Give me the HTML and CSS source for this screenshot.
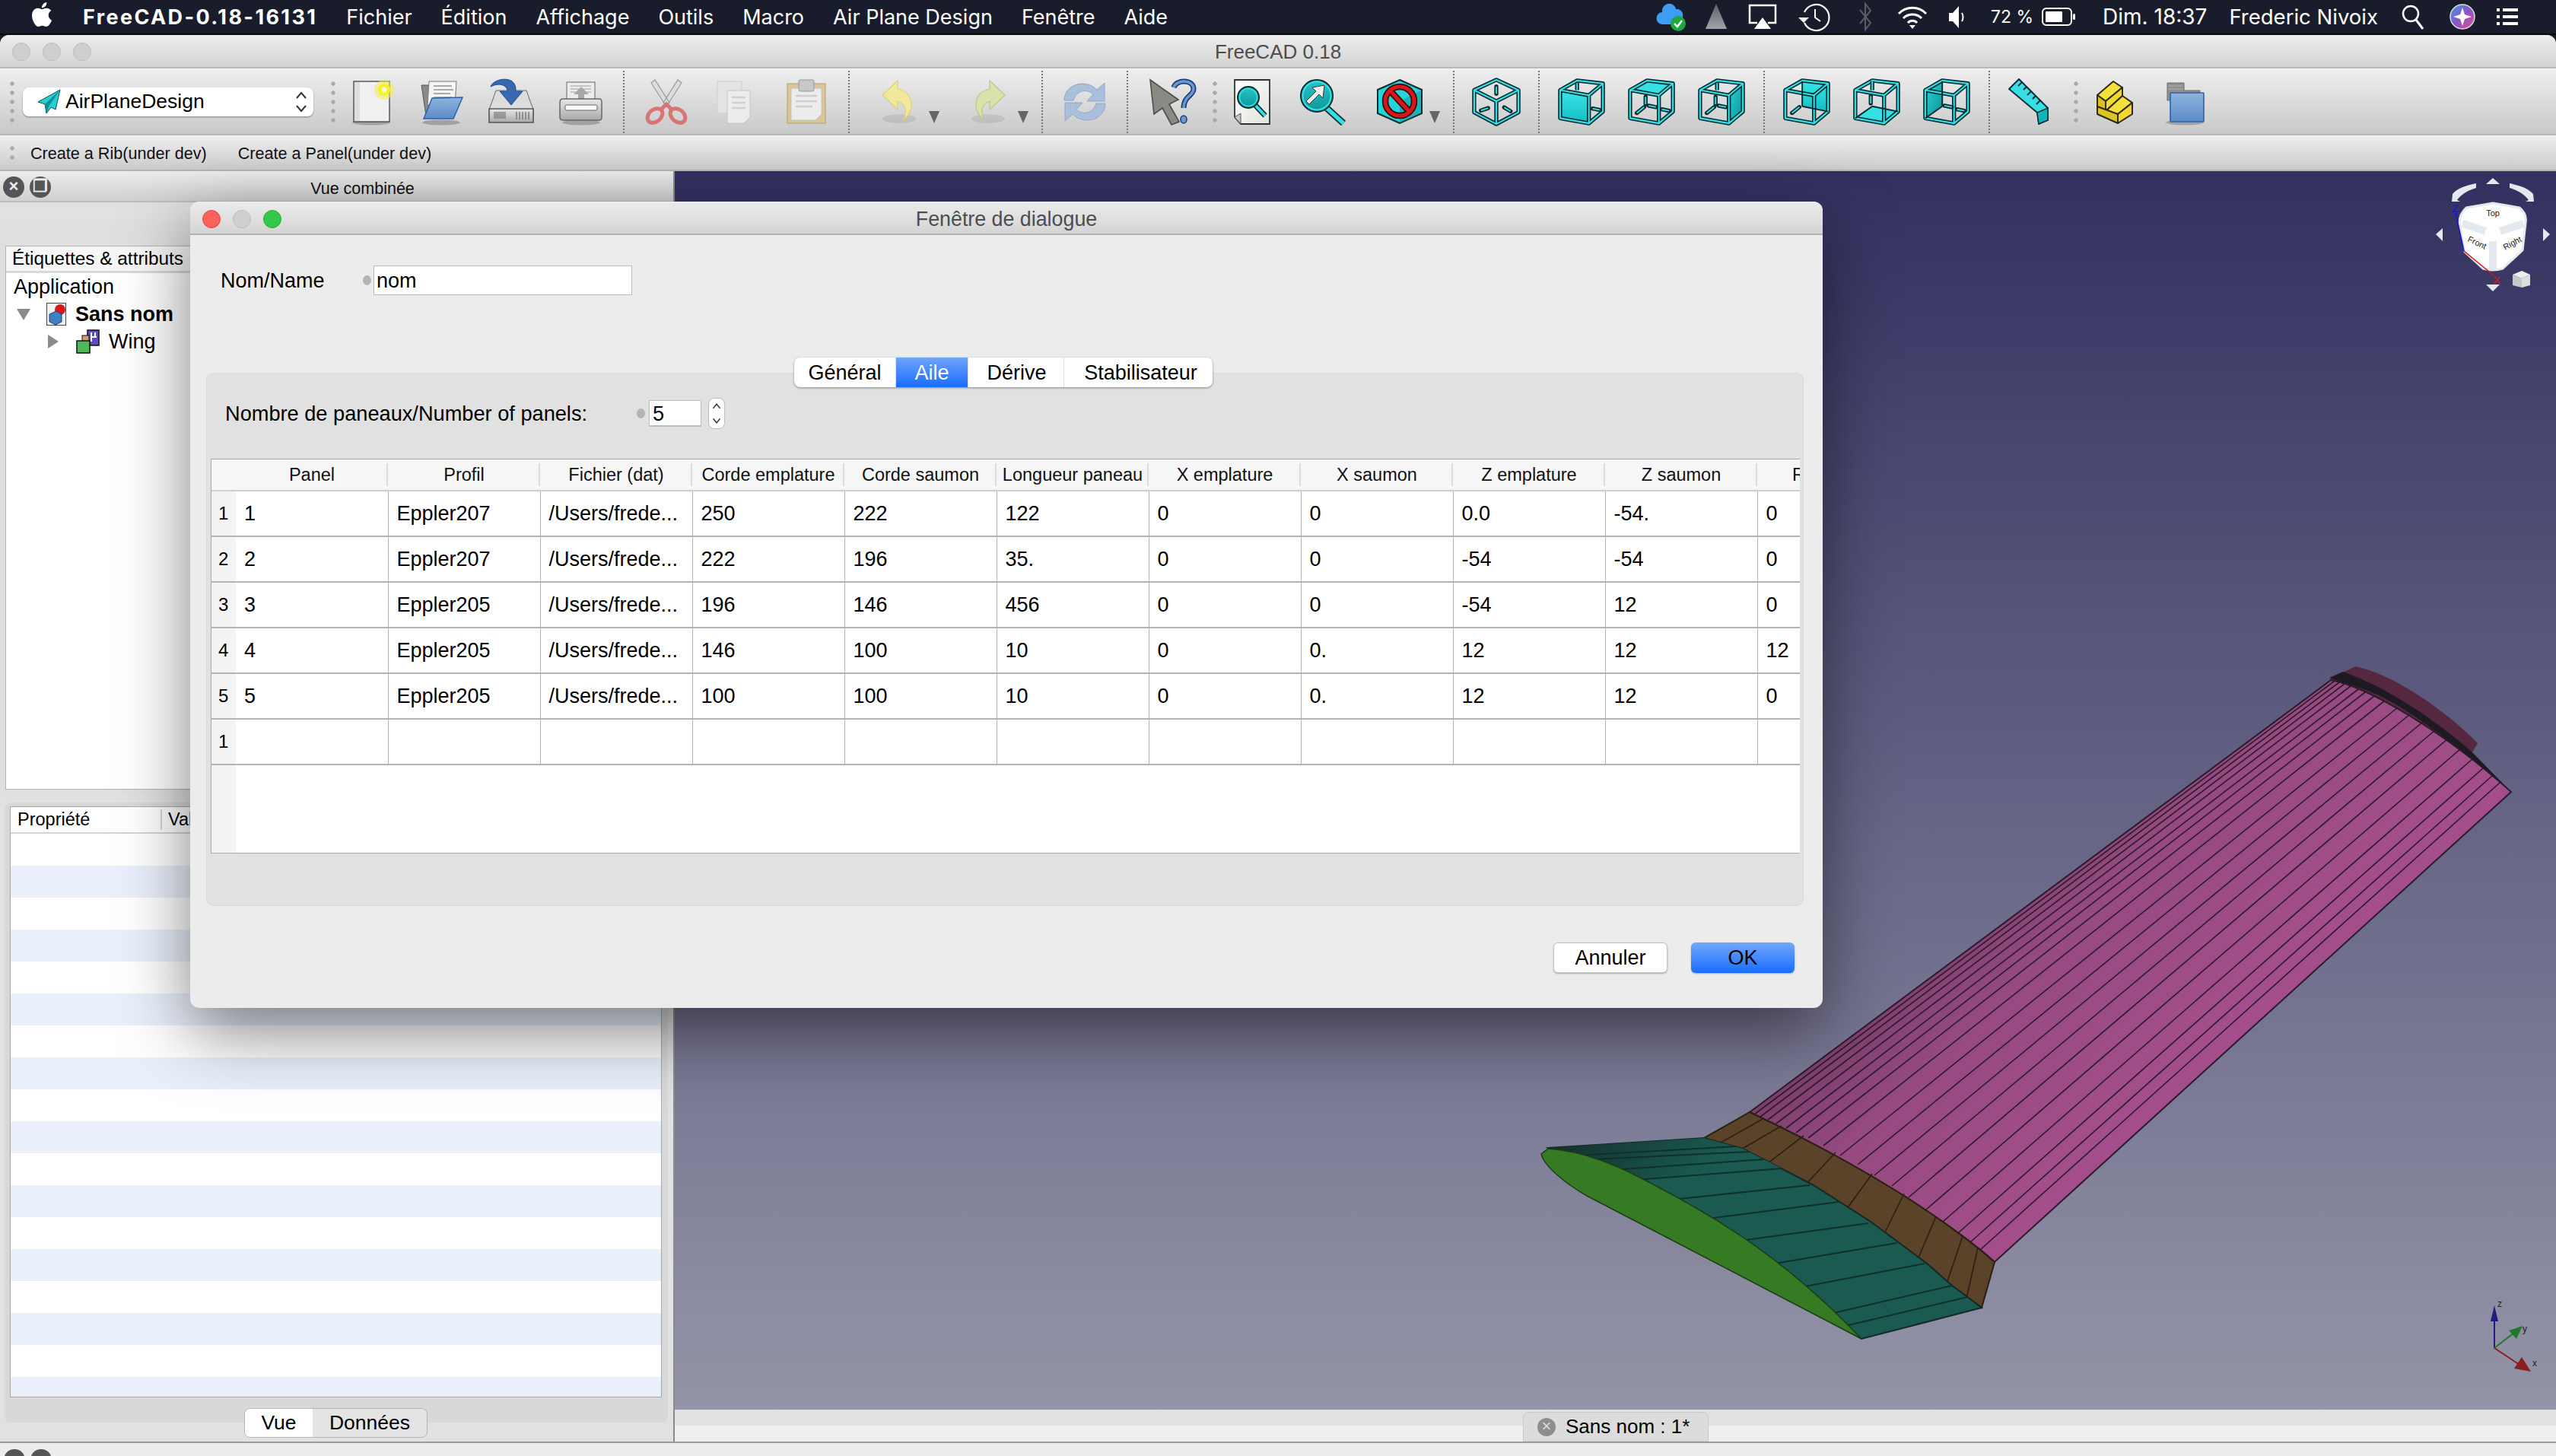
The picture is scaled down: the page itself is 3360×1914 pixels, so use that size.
FILE: index.html
```html
<!DOCTYPE html>
<html lang="fr">
<head>
    <meta charset="UTF-8">
    <title>FreeCAD 0.18</title>
    <link rel="stylesheet" href="styles.css">
</head>
<body>
    <svg class="defs" width="0" height="0">
        <defs>
            <linearGradient id="cyanFace" x1="0" y1="0" x2="0" y2="1"><stop offset="0" stop-color="#39e6e8"/><stop offset="1" stop-color="#14bcc2"/></linearGradient>
            <linearGradient id="darkFace" x1="0" y1="0" x2="1" y2="1"><stop offset="0" stop-color="#2bd4d8"/><stop offset="1" stop-color="#0b9296"/></linearGradient>
            <linearGradient id="glass" x1="0" y1="0" x2="0" y2="1"><stop offset="0" stop-color="#27c6ca"/><stop offset="1" stop-color="#0e9599"/></linearGradient>
            <linearGradient id="paper" x1="0" y1="0" x2="1" y2="1"><stop offset="0" stop-color="#ffffff"/><stop offset="1" stop-color="#dfe4da"/></linearGradient>
            <linearGradient id="folderBlue" x1="0" y1="0" x2="0" y2="1"><stop offset="0" stop-color="#8fb4dc"/><stop offset="1" stop-color="#5a8cc8"/></linearGradient>
            <linearGradient id="driveBody" x1="0" y1="0" x2="0" y2="1"><stop offset="0" stop-color="#e8e8e8"/><stop offset="1" stop-color="#a8a8a8"/></linearGradient>
            <linearGradient id="wingPink" gradientUnits="userSpaceOnUse" x1="2300" y1="1300" x2="2640" y2="1640"><stop offset="0" stop-color="#55304f"/><stop offset=".22" stop-color="#7a3e6c"/><stop offset=".5" stop-color="#954a80"/><stop offset="1" stop-color="#a34e8a"/></linearGradient>
            <linearGradient id="wingTeal" gradientUnits="userSpaceOnUse" x1="2060" y1="1480" x2="2180" y2="1600"><stop offset="0" stop-color="#14302c"/><stop offset="1" stop-color="#1a5a50"/></linearGradient>
            <linearGradient id="siri" x1="0" y1="0" x2="1" y2="1"><stop offset="0" stop-color="#3aa0e8"/><stop offset=".5" stop-color="#8a55c8"/><stop offset="1" stop-color="#e0508a"/></linearGradient>
            <linearGradient id="deltaGrey" x1="0" y1="0" x2="0" y2="1"><stop offset="0" stop-color="#5d6068"/><stop offset="1" stop-color="#a2a4a8"/></linearGradient>

            <g id="slot-v"><path d="M0 -5V5" stroke="#052b30" stroke-width="5.5" stroke-linecap="round"/><path d="M0 -5V5" stroke="#35dfe3" stroke-width="2"/></g>
            <g id="slot-h"><path d="M-5 -1L5 1" stroke="#052b30" stroke-width="5.5" stroke-linecap="round"/><path d="M-5 -1L5 1" stroke="#35dfe3" stroke-width="2"/></g>
            <g id="slot-d"><path d="M-5 4L5 -4" stroke="#052b30" stroke-width="5.5" stroke-linecap="round"/><path d="M-5 4L5 -4" stroke="#35dfe3" stroke-width="2"/></g>
            <g id="cube-frame" fill="none" stroke-linejoin="round">
                <path d="M24 1L59 5V43L40 59L1 52V14ZM1 14L40 21L59 5M40 21V59" stroke="#052b30" stroke-width="5.5"/>
                <path d="M24 1L59 5V43L40 59L1 52V14ZM1 14L40 21L59 5M40 21V59" stroke="#35dfe3" stroke-width="2.2"/>
            </g>
            <g id="cube-back" fill="none"><path d="M24 2V14" stroke="#052b30" stroke-width="5.5"/><path d="M24 2V14" stroke="#35dfe3" stroke-width="2"/></g>
            <g id="tool-shadow"><ellipse cx="32" cy="59" rx="25" ry="3.5" fill="#000" opacity=".22"/></g>
        </defs>
    </svg>

    <header class="menubar">
        <svg class="apple" viewBox="0 0 24 24"><path fill="#fff" d="M12.152 6.896c-.948 0-2.415-1.078-3.96-1.04-2.04.027-3.91 1.183-4.961 3.014-2.117 3.675-.546 9.103 1.519 12.09 1.013 1.454 2.208 3.09 3.792 3.039 1.52-.065 2.09-.987 3.935-.987 1.831 0 2.35.987 3.96.948 1.637-.026 2.676-1.48 3.676-2.948 1.156-1.688 1.636-3.325 1.662-3.415-.039-.013-3.182-1.221-3.22-4.857-.026-3.04 2.48-4.494 2.597-4.559-1.429-2.09-3.623-2.324-4.39-2.376-2-.156-3.675 1.09-4.61 1.09zM15.53 3.83c.843-1.012 1.4-2.427 1.245-3.83-1.207.052-2.662.805-3.532 1.818-.78.896-1.454 2.338-1.273 3.714 1.338.104 2.715-.688 3.559-1.701"/></svg>
        <nav class="menu">
            <span class="app-name">FreeCAD-0.18-16131</span>
            <span>Fichier</span>
            <span>Édition</span>
            <span>Affichage</span>
            <span>Outils</span>
            <span>Macro</span>
            <span>Air Plane Design</span>
            <span>Fenêtre</span>
            <span>Aide</span>
        </nav>
        <div class="status">
            <svg class="st st-cloud" viewBox="0 0 56 40"><path fill="#3d9df5" d="M14 30a8 8 0 0 1-1-16 10 10 0 0 1 5-10c5-3 12 0 13 6a8 8 0 0 1 9 10v4a6 6 0 0 1-6 6z"/><circle cx="34" cy="29" r="10" fill="#1ca83a"/><path d="M29 29l4 4 6-8" fill="none" stroke="#fff" stroke-width="2.5"/></svg>
            <svg class="st st-delta" viewBox="0 0 56 40"><path fill="url(#deltaGrey)" d="M28 3L42 36H14z"/></svg>
            <svg class="st st-air" viewBox="0 0 65 40"><path fill="none" stroke="#fff" stroke-width="2.5" d="M26 28H16V5H50V28H40"/><path fill="#fff" d="M33 21L44 36H22z"/></svg>
            <svg class="st st-time" viewBox="0 0 70 40"><path fill="none" stroke="#fff" stroke-width="2.2" d="M23 14A17 17 0 1 1 23 28"/><path fill="#fff" d="M15 21h14l-7 7z"/><path fill="none" stroke="#fff" stroke-width="2" d="M37 10V21L44 26"/></svg>
            <svg class="st st-bt" viewBox="0 0 66 40"><path fill="none" stroke="#5a5d66" stroke-width="2" d="M26 11L40 28L33 37V3L40 12L26 29"/></svg>
            <svg class="st st-wifi" viewBox="0 0 57 40"><path fill="none" stroke="#fff" stroke-width="3" d="M11 16a25 25 0 0 1 36 0M17 22a17 17 0 0 1 24 0M23 28a8 8 0 0 1 12 0"/><path fill="#fff" d="M29 36l-4-5h8z"/></svg>
            <svg class="st st-vol" viewBox="0 0 55 40"><path fill="#fff" d="M20 15h5l8-9v29l-8-9h-5z"/><path fill="none" stroke="#fff" stroke-width="2" d="M37 15c2 3 2 8 0 11"/></svg>
            <span class="st-pct">72 %</span>
            <svg class="st-bat" viewBox="0 0 44 24"><rect x="1" y="1" width="38" height="22" rx="5" fill="none" stroke="#fff" stroke-width="2"/><rect x="5" y="5" width="22" height="14" rx="1" fill="#fff"/><rect x="41" y="8" width="3" height="8" rx="1.5" fill="#fff"/></svg>
            <span class="st-clock">Dim. 18:37</span>
            <span class="st-user">Frederic Nivoix</span>
            <svg class="st st-search" viewBox="0 0 40 40"><circle cx="17" cy="16" r="10" fill="none" stroke="#fff" stroke-width="2.5"/><path d="M24 24L33 36" stroke="#fff" stroke-width="3"/></svg>
            <svg class="st st-siri" viewBox="0 0 40 40"><circle cx="20" cy="20" r="16" fill="url(#siri)" stroke="#ddd" stroke-width="1.5"/><path fill="#fff" d="M20 8l3 9 9 3-9 3-3 9-3-9-9-3 9-3z"/></svg>
            <svg class="st st-list" viewBox="0 0 36 40"><path fill="#fff" d="M4 9h4v4H4zM12 9h20v4H12zM4 18h4v4H4zM12 18h20v4H12zM4 27h4v4H4zM12 27h20v4H12z"/></svg>
        </div>
    </header>

    <div class="window">
        <div class="titlebar">
            <div class="lights">
                <i class="light"></i><i class="light"></i><i class="light"></i>
            </div>
            <span class="window-title">FreeCAD 0.18</span>
        </div>

        <div class="toolbar">
            <i class="handle"></i>
            <div class="combo">
                <svg class="combo-icon" viewBox="0 0 32 34"><path fill="#27cfd3" stroke="#0b5055" stroke-width="1" d="M30 1L1 17l9 3 2 12 6-8 6 3z"/><path fill="#0e8f93" d="M30 1L10 20l2 12 3-9z"/></svg>
                <span class="combo-label">AirPlaneDesign</span>
                <svg class="combo-arrows" viewBox="0 0 16 30"><path fill="none" stroke="#333" stroke-width="2" d="M2 10L8 3l6 7M2 20l6 7 6-7"/></svg>
            </div>
            <i class="handle handle-gap"></i>

            <button class="tb"><svg viewBox="0 0 64 64">
                <use href="#tool-shadow"/>
                <rect x="9" y="5" width="47" height="53" fill="#f0f0f0" stroke="#333" stroke-width="1.2"/>
                <rect x="10" y="6" width="7" height="51" fill="#dedede"/>
                <circle cx="49" cy="16" r="13" fill="#f3ec4a" opacity=".55"/><circle cx="49" cy="16" r="8" fill="#f6f02e"/><circle cx="49" cy="16" r="3.5" fill="#fffbc0"/>
            </svg></button>
            <button class="tb"><svg viewBox="0 0 64 64">
                <use href="#tool-shadow"/>
                <path fill="#8a8a8a" stroke="#555" d="M6 10H20V50H12z"/>
                <path fill="#f4f4f4" stroke="#777" d="M16 5L52 5 L50 36H14z"/>
                <path stroke="#aaa" stroke-width="2" d="M22 11H46M22 16H48M22 21H44M22 26H46"/>
                <path fill="url(#folderBlue)" stroke="#2f62a4" stroke-width="1.5" d="M20 27L60 26 48 54H9z"/>
            </svg></button>
            <button class="tb"><svg viewBox="0 0 64 64">
                <path fill="#dcdcdc" stroke="#666" d="M12 17H52L61 42V57H3V42z"/>
                <path fill="url(#driveBody)" stroke="#555" stroke-width="1.5" d="M3 41H61V59H3z"/>
                <rect x="9" y="45" width="16" height="9" fill="#777" opacity=".6"/>
                <path stroke="#777" stroke-width="1.4" d="M39 45V55M43 45V55M47 45V55M51 45V55M55 45V55"/>
                <path fill="#3869ae" stroke="#1e4a8c" d="M5 12C8 2 30 -2 36 8C38 12 38 14 38 18H47L32 36L17 18H27C27 10 16 6 5 12z"/>
            </svg></button>
            <button class="tb"><svg viewBox="0 0 64 64">
                <use href="#tool-shadow"/>
                <rect x="13" y="6" width="37" height="28" fill="#ececec" stroke="#666"/>
                <path stroke="#c4c4c4" stroke-width="2" d="M18 11H45M18 15H45M18 19H28M36 19H45"/>
                <path fill="#a8a8a8" d="M32 12L42 22H36V32H28V22H22z"/>
                <path fill="url(#driveBody)" stroke="#666" stroke-width="1.5" d="M8 28H56Q59 28 59 33V52Q59 56 56 56H8Q4 56 4 52V33Q4 28 8 28z"/>
                <rect x="11" y="36" width="42" height="7" rx="2" fill="#fafafa" stroke="#666"/>
            </svg></button>
            <i class="tb-sep"></i>
            <button class="tb"><svg viewBox="0 0 64 64">
                <path fill="#dcdcdc" stroke="#999" stroke-width="1.2" d="M12 7L17 3 36 33 32 38zM52 7L47 3 28 33 32 38z"/>
                <g fill="none" stroke="#d87474" stroke-width="5"><ellipse cx="17" cy="50" rx="11" ry="8" transform="rotate(-40 17 50)"/><ellipse cx="47" cy="50" rx="11" ry="8" transform="rotate(40 47 50)"/><path d="M25 42L32 35 39 42"/></g>
            </svg></button>
            <button class="tb"><svg viewBox="0 0 64 64">
                <rect x="7" y="5" width="32" height="42" fill="#e3e3e3" stroke="#cfcfcf"/>
                <path fill="#ececec" stroke="#c4c4c4" d="M20 17H50V52L42 60H20z"/>
                <path stroke="#d0d0d0" stroke-width="2.5" d="M26 26H44M26 33H44M26 40H44"/>
            </svg></button>
            <button class="tb"><svg viewBox="0 0 64 64">
                <rect x="7" y="8" width="50" height="52" fill="#d9c69a" stroke="#b89e68"/>
                <path fill="#ececec" stroke="#c4c4c4" d="M12 14H52V48L44 56H12z"/>
                <rect x="22" y="3" width="20" height="15" rx="2" fill="#c8c8c8" stroke="#999"/>
                <path stroke="#cfcfcf" stroke-width="2.5" d="M18 24H46M18 31H46M18 38H40"/>
            </svg></button>
            <i class="tb-sep"></i>
            <button class="tb tb-drop"><svg viewBox="0 0 64 64">
                <ellipse cx="32" cy="54" rx="22" ry="6" fill="#000" opacity=".08"/>
                <path fill="#f2e89c" stroke="#dccf7c" stroke-width="1.2" d="M10 23L30 4V15C48 18 56 38 38 56 42 44 42 36 30 31V42z"/>
            </svg><i class="drop-arrow"></i></button>
            <button class="tb tb-drop"><svg viewBox="0 0 64 64">
                <ellipse cx="32" cy="54" rx="22" ry="6" fill="#000" opacity=".08"/>
                <path fill="#d9e2aa" stroke="#bcc88a" stroke-width="1.2" d="M54 23L34 4V15C16 18 8 38 26 56 22 44 22 36 34 31V42z"/>
            </svg><i class="drop-arrow"></i></button>
            <i class="tb-sep"></i>
            <button class="tb"><svg viewBox="0 0 64 64">
                <g fill="#a9bfdb" stroke="#8ea8c8">
                    <path d="M5 30C5 8 34 1 48 16L58 7V31H35L43 22C34 14 21 17 17 30z"/>
                    <path d="M59 34C59 56 30 63 16 48L6 57V33H29L21 42C30 50 43 47 47 34z"/>
                </g>
            </svg></button>
            <i class="tb-sep"></i>
            <button class="tb"><svg viewBox="0 0 64 64">
                <path fill="#8a8a84" stroke="#4e4e4a" stroke-width="1.6" d="M6 3L43 29 31 35 44 58 34 62 22 40 11 48z"/>
                <path fill="none" stroke="#1e3f78" stroke-width="7" d="M37 13C40 2 63 2 63 15C63 24 50 24 50 40"/>
                <path fill="none" stroke="#6d97cf" stroke-width="3.5" d="M37 13C40 2 63 2 63 15C63 24 50 24 50 40"/>
                <ellipse cx="50" cy="55" rx="4" ry="5" fill="#6d97cf" stroke="#1e3f78" stroke-width="1.6"/>
            </svg></button>
            <i class="handle handle-mid"></i>
            <button class="tb"><svg viewBox="0 0 64 64">
                <path fill="url(#paper)" stroke="#2c3336" stroke-width="1.8" d="M9 3H55V61H17L9 52z"/>
                <path fill="#c4c8c0" stroke="#555" d="M9 52L17 47V61z"/>
                <path d="M34 34L49 50" stroke="#052b30" stroke-width="7"/><path d="M34 34L49 50" stroke="#35dfe3" stroke-width="4"/>
                <circle cx="27" cy="26" r="14" fill="url(#glass)" stroke="#052b30" stroke-width="2"/>
                <circle cx="27" cy="26" r="11.5" fill="none" stroke="#35dfe3" stroke-width="1.5"/>
            </svg></button>
            <button class="tb"><svg viewBox="0 0 64 64">
                <path d="M38 40L60 60" stroke="#052b30" stroke-width="9"/><path d="M38 40L60 60" stroke="#35dfe3" stroke-width="5.5"/>
                <circle cx="25" cy="24" r="21" fill="url(#glass)" stroke="#052b30" stroke-width="2"/>
                <circle cx="25" cy="24" r="18.5" fill="none" stroke="#35dfe3" stroke-width="2"/>
                <path fill="#f0f0e8" stroke="#333" d="M35 10L33 27 28 22 15 35 11 31 24 18 19 13z"/>
            </svg></button>
            <button class="tb tb-drop"><svg viewBox="0 0 64 64">
                <path fill="#25d4d8" stroke="#052b30" stroke-width="2" d="M32 3L61 16V47L32 60 3 47V16z"/>
                <path fill="#16b4b8" d="M32 31L60 17V46L32 59z"/>
                <circle cx="32" cy="31" r="19" fill="none" stroke="#3a0808" stroke-width="8.5"/>
                <path d="M20 18L44 44" stroke="#3a0808" stroke-width="8.5"/>
                <circle cx="32" cy="31" r="19" fill="none" stroke="#d81818" stroke-width="5"/>
                <path d="M20 18L44 44" stroke="#d81818" stroke-width="5"/>
            </svg><i class="drop-arrow"></i></button>
            <i class="tb-sep"></i>
            <button class="tb"><svg viewBox="-1 -1 66 66" fill="none">
                <path d="M32 2L62 16V46L32 62 2 46V16ZM2 16L32 31 62 16M32 31V62" stroke="#052b30" stroke-width="5.5" stroke-linejoin="round"/>
                <path d="M32 2L62 16V46L32 62 2 46V16ZM2 16L32 31 62 16M32 31V62" stroke="#35dfe3" stroke-width="2.2"/>
                <use href="#slot-v" x="32" y="16"/><use href="#slot-h" x="16" y="42" transform="rotate(-30 16 42)"/><use href="#slot-h" x="47" y="42" transform="rotate(20 47 42)"/>
            </svg></button>
            <i class="tb-sep"></i>
            <button class="tb"><svg viewBox="-3 -3 66 66">
                <path fill="url(#cyanFace)" d="M1 14L40 21V59L1 52z"/>
                <use href="#cube-back"/><use href="#cube-frame"/><use href="#slot-h" x="50" y="40"/>
            </svg></button>
            <button class="tb"><svg viewBox="-3 -3 66 66">
                <path fill="#33e0e4" d="M24 1L59 5 40 21 1 14z"/>
                <use href="#cube-frame"/><use href="#slot-v" x="22" y="28"/><use href="#slot-d" x="15" y="41"/><use href="#slot-h" x="31" y="36"/><use href="#slot-h" x="49" y="41"/>
            </svg></button>
            <button class="tb"><svg viewBox="-3 -3 66 66">
                <path fill="url(#darkFace)" d="M40 21L59 5V43L40 59z"/>
                <use href="#cube-back"/><use href="#cube-frame"/><use href="#slot-v" x="22" y="28"/><use href="#slot-d" x="15" y="41"/><use href="#slot-h" x="31" y="36"/>
            </svg></button>
            <i class="tb-sep"></i>
            <button class="tb"><svg viewBox="-3 -3 66 66">
                <path fill="url(#cyanFace)" d="M24 1L59 5V43L24 36z"/>
                <use href="#cube-frame"/><path d="M24 2V36" stroke="#052b30" stroke-width="2"/><path d="M24 36L59 43" stroke="#052b30" stroke-width="2"/><use href="#slot-d" x="15" y="41"/>
            </svg></button>
            <button class="tb"><svg viewBox="-3 -3 66 66">
                <path fill="#33e0e4" d="M1 52L24 36 59 43 40 59z"/>
                <use href="#cube-frame"/><use href="#cube-back"/><path d="M24 36L59 43M24 36L1 52" stroke="#052b30" stroke-width="2"/><use href="#slot-v" x="22" y="27"/>
            </svg></button>
            <button class="tb"><svg viewBox="-3 -3 66 66">
                <path fill="url(#darkFace)" d="M24 1L1 14V52L24 36z"/>
                <use href="#cube-frame"/><path d="M24 2V36M24 36L1 52" stroke="#052b30" stroke-width="2"/><use href="#slot-h" x="32" y="36"/><use href="#slot-h" x="49" y="41"/>
            </svg></button>
            <i class="tb-sep tb-sep-tight"></i>
            <button class="tb"><svg viewBox="0 0 64 64">
                <path fill="#35dfe3" stroke="#052b30" stroke-width="1.8" stroke-linejoin="round" d="M19 2L57 40V56L45 61L43 46L6 15z"/>
                <path fill="#12b4b8" stroke="#052b30" stroke-width="1.4" d="M43 46L57 40V56L45 61z"/>
                <path stroke="#052b30" stroke-width="1.8" d="M23 6l-5 5M29 12l-4 4M35 18l-5 5M41 24l-4 4M47 30l-5 5"/>
            </svg></button>
            <i class="handle handle-last"></i>
            <button class="tb"><svg viewBox="0 0 64 64">
                <g stroke="#2e2a10" stroke-width="2" stroke-linejoin="round">
                    <path fill="#f4e03c" d="M30 5L42 13 20 31 9 23z"/>
                    <path fill="#d9bf20" d="M9 23L20 31V46L9 38z"/>
                    <path fill="#f0d830" d="M20 31L42 13V24L20 44z"/>
                    <path fill="#f4e03c" d="M20 44L42 24 55 33 36 48z"/>
                    <path fill="#dcc424" d="M9 38L36 48V60L9 48z"/>
                    <path fill="#f0d830" d="M36 48L55 33V48L36 60z"/>
                </g>
            </svg></button>
            <button class="tb"><svg viewBox="0 0 64 64">
                <use href="#tool-shadow"/>
                <path fill="#8f8f8f" stroke="#6c6c6c" d="M9 7H31V17H52V30H9z"/>
                <path stroke="#a8a8a8" stroke-width="1.5" d="M10 11H30M10 15H30"/>
                <rect x="13" y="20" width="44" height="38" rx="1" fill="url(#folderBlue)" stroke="#2f62a4" stroke-width="1.6"/>
            </svg></button>
        </div>

        <div class="toolbar-small">
            <i class="handle handle-short"></i>
            <span class="cmd">Create a Rib(under dev)</span>
            <span class="cmd">Create a Panel(under dev)</span>
        </div>

        <div class="workspace">
            <aside class="dock">
                <div class="dock-title">
                    <i class="dock-btn">×</i>
                    <i class="dock-btn">❐</i>
                    <span class="dock-name">Vue combinée</span>
                </div>
                <div class="dock-pane">
                    <div class="tree">
                        <div class="tree-head">Étiquettes &amp; attributs</div>
                        <div class="tree-row">Application</div>
                        <div class="tree-row tree-doc">
                            <i class="arrow-down"></i>
                            <svg class="tree-icon" viewBox="0 0 26 30"><rect x=".5" y=".5" width="25" height="29" fill="#f2f2f2" stroke="#444"/><circle cx="18" cy="9" r="7" fill="#d81818"/><path fill="#3f7fc4" stroke="#1e3f78" d="M4 15L13 11 20 15V25L12 29 4 25z"/></svg>
                            <b>Sans nom</b>
                        </div>
                        <div class="tree-row tree-wing">
                            <i class="arrow-right"></i>
                            <svg class="tree-icon-wide" viewBox="0 0 32 32"><rect x="16" y="1" width="15" height="20" fill="#5a4ec4" stroke="#111" stroke-width="1.5"/><path d="M21 4V16M26 4V9M21 10H28" stroke="#fff" stroke-width="2"/><rect x="9" y="8" width="9" height="10" fill="#caa070" stroke="#111"/><rect x="2" y="15" width="17" height="16" fill="#4eb85a" stroke="#111" stroke-width="1.5"/></svg>
                            <span>Wing</span>
                        </div>
                    </div>
                </div>
                <div class="props">
                    <div class="props-table">
                        <div class="props-head"><span class="props-col">Propriété</span><span class="props-col2">Valeur</span></div>
                        <div class="props-rows"></div>
                    </div>
                    <div class="props-tabs">
                        <span class="props-tab props-tab-on">Vue</span>
                        <span class="props-tab">Données</span>
                    </div>
                </div>
            </aside>

            <section class="view">
                <div class="canvas">
                    <svg class="scene" viewBox="887 226 2473 1628">
                        <!-- wing -->
                        <path fill="#552840" d="M3062 894L3096 877C3140 885 3210 930 3257 978L3250 990L3190 960z"/>
                        <path fill="#1e1a22" d="M3062 892L3080 884C3140 905 3205 950 3250 990L3301 1042C3240 990 3160 925 3110 908z"/>
                        <path fill="url(#wingPink)" stroke="#2a1a2a" stroke-width="2" d="M2300 1463L3064 895C3110 903 3210 960 3301 1042L2622 1660C2590 1630 2480 1550 2300 1463z"/>
                        <g stroke="#2c1a2c" stroke-width="1.6">
                            <path d="M2306 1466L3069 896M2314 1469L3075 898M2324 1473L3082 900M2335 1478L3090 903M2348 1484L3100 907M2361 1490L3109 911M2377 1497L3121 916M2397 1507L3135 922M2419 1520L3152 931M2442 1532L3168 940M2464 1546L3185 950M2487 1560L3201 961M2509 1575L3218 972M2532 1591L3235 985M2554 1607L3251 998M2574 1622L3265 1010M2590 1634L3277 1020M2603 1644L3287 1029"/>
                        </g>
                        <path fill="#5a4328" stroke="#2a2014" stroke-width="2" d="M2300 1463C2400 1510 2530 1580 2622 1660L2605 1720L2566 1691L2533 1662L2459 1607L2384 1559L2291 1511L2240 1497z"/>
                        <g stroke="#2a2014" stroke-width="1.6">
                            <path d="M2319 1471L2262 1503M2342 1481L2287 1513M2371 1494L2320 1533M2413 1516L2368 1564M2461 1544L2422 1598M2503 1570L2470 1637M2545 1600L2517 1666M2580 1626L2558 1691M2600 1641L2585 1708"/>
                        </g>
                        <path fill="#1a5a50" stroke="#142a26" stroke-width="2" d="M2035 1510L2240 1497L2291 1511L2384 1559L2459 1607L2533 1662L2566 1691L2605 1720L2447 1761L2226 1620z"/>
                        <path fill="url(#wingTeal)" d="M2035 1510L2240 1497L2291 1511L2342 1537L2151 1552L2100 1550z"/>
                        <g stroke="#10302a" stroke-width="2">
                            <path d="M2198 1578L2379 1559M2237 1604L2417 1581M2280 1633L2456 1609M2321 1664L2493 1635M2363 1694L2530 1662M2406 1728L2566 1691M2426 1744L2586 1706M2151 1552L2342 1537M2119 1539L2319 1525M2096 1525L2300 1515M2072 1520L2282 1508"/>
                        </g>
                        <path fill="#367a24" stroke="#1d3d14" stroke-width="1.5" d="M2035 1511C2100 1515 2160 1550 2226 1587S2370 1680 2447 1761L2086 1573C2060 1558 2030 1535 2026 1518z"/>

                        <!-- nav cube -->
                        <g fill="#e4e9f0">
                            <path d="M3277 235L3286 243H3268z"/>
                            <path d="M3202 309L3211 301V318z"/>
                            <path d="M3352 309L3343 301V318z"/>
                            <path d="M3277 384L3268 375H3286z"/>
                            <path d="M3255 242V248C3242 252 3234 258 3230 264L3234 266H3223L3224 256C3230 249 3240 245 3255 242z"/>
                            <path d="M3299 242V248C3312 252 3320 258 3324 264L3320 266H3331L3330 256C3324 249 3314 245 3299 242z"/>
                        </g>
                        <path fill="#fff" stroke="#e4e9f0" stroke-width="3" stroke-linejoin="round" d="M3277 268L3312 274Q3322 282 3320 294L3316 330L3290 354Q3277 358 3264 354L3240 332L3233 294Q3233 282 3242 274z"/>
                        <path fill="none" stroke="#e4e9f0" stroke-width="10" d="M3237 295L3277 308 3317 295M3277 308V355"/>
                        <circle cx="3277" cy="308" r="10.5" fill="#fff"/>
                        <text class="cube-text" x="3277" y="285" text-anchor="middle">Top</text>
                        <text class="cube-text" transform="translate(3243 318) rotate(25)">Front</text>
                        <text class="cube-text" transform="translate(3293 330) rotate(-28)">Right</text>
                        <path stroke="#1414d8" stroke-width="1.6" d="M3239 331L3228 281"/>
                        <path stroke="#d81414" stroke-width="1.6" d="M3239 331L3278 363"/>
                        <text class="axis-text axis-z" x="3223" y="280">Z</text>
                        <text class="axis-text axis-x" x="3277" y="374">X</text>
                        <path fill="#eee" d="M3303 362L3315 357 3326 362 3315 367z"/>
                        <path fill="#c8c8c8" d="M3303 362L3315 367V379L3303 376z"/>
                        <path fill="#ddd" d="M3326 362L3315 367V379L3326 376z"/>
                        <path fill="#3a3a50" d="M3330 363H3344L3337 370z"/>

                        <!-- axis triad -->
                        <path d="M3279 1773V1730" stroke="#1e1e80" stroke-width="2"/><path fill="#1e1e80" d="M3279 1717L3284 1738H3274z"/>
                        <path d="M3279 1773L3305 1753" stroke="#1e7a2a" stroke-width="2"/><path fill="#1e7a2a" d="M3316 1744L3308 1761 3298 1750z"/>
                        <path d="M3279 1773L3312 1795" stroke="#8a1e1e" stroke-width="2"/><path fill="#8a1e1e" d="M3327 1804L3305 1800 3315 1785z"/>
                        <text class="triad-text" x="3283" y="1719">z</text>
                        <text class="triad-text" x="3316" y="1752">y</text>
                        <text class="triad-text" x="3329" y="1797">x</text>
                    </svg>
                </div>
                <div class="doc-tabs">
                    <div class="doc-tab"><i class="doc-close">×</i><span>Sans nom : 1*</span></div>
                </div>
            </section>
        </div>
        <div class="bottom-bar"><i class="dock-btn"></i><i class="dock-btn"></i></div>
    </div>

    <div class="dialog">
        <div class="dialog-title">
            <div class="lights lights-dialog">
                <i class="light light-red"></i><i class="light"></i><i class="light light-green"></i>
            </div>
            <span class="dialog-name">Fenêtre de dialogue</span>
        </div>
        <div class="name-row">
            <label class="name-label">Nom/Name</label>
            <i class="led"></i>
            <div class="text-input">nom</div>
        </div>
        <div class="tabs">
            <span class="tab">Général</span>
            <span class="tab tab-on">Aile</span>
            <span class="tab">Dérive</span>
            <span class="tab">Stabilisateur</span>
        </div>
        <div class="pane">
            <div class="panels-row">
                <label class="panels-label">Nombre de paneaux/Number of panels:</label>
                <i class="led"></i>
                <div class="spin-input">5</div>
                <div class="stepper"><svg viewBox="0 0 22 41"><path fill="none" stroke="#333" stroke-width="1.6" d="M6 13L11 7l5 6M6 28l5 6 5-6"/></svg></div>
            </div>
            <div class="grid-box">
                <table class="grid">
                    <thead>
                        <tr><th class="corner"></th><th>Panel</th><th>Profil</th><th>Fichier (dat)</th><th>Corde emplature</th><th>Corde saumon</th><th>Longueur paneau</th><th>X emplature</th><th>X saumon</th><th>Z emplature</th><th>Z saumon</th><th class="cut-col">R</th></tr>
                    </thead>
                    <tbody>
                        <tr><th>1</th><td>1</td><td>Eppler207</td><td>/Users/frede...</td><td>250</td><td>222</td><td>122</td><td>0</td><td>0</td><td>0.0</td><td>-54.</td><td>0</td></tr>
                        <tr><th>2</th><td>2</td><td>Eppler207</td><td>/Users/frede...</td><td>222</td><td>196</td><td>35.</td><td>0</td><td>0</td><td>-54</td><td>-54</td><td>0</td></tr>
                        <tr><th>3</th><td>3</td><td>Eppler205</td><td>/Users/frede...</td><td>196</td><td>146</td><td>456</td><td>0</td><td>0</td><td>-54</td><td>12</td><td>0</td></tr>
                        <tr><th>4</th><td>4</td><td>Eppler205</td><td>/Users/frede...</td><td>146</td><td>100</td><td>10</td><td>0</td><td>0.</td><td>12</td><td>12</td><td>12</td></tr>
                        <tr><th>5</th><td>5</td><td>Eppler205</td><td>/Users/frede...</td><td>100</td><td>100</td><td>10</td><td>0</td><td>0.</td><td>12</td><td>12</td><td>0</td></tr>
                        <tr><th>1</th><td></td><td></td><td></td><td></td><td></td><td></td><td></td><td></td><td></td><td></td><td></td></tr>
                    </tbody>
                </table>
            </div>
        </div>
        <div class="dialog-buttons">
            <button class="btn">Annuler</button>
            <button class="btn btn-ok">OK</button>
        </div>
    </div>
</body>
</html>
```

FILE: styles.css
```css
* {
    box-sizing: border-box;
}

html, body {
    margin: 0;
    height: 100%;
}

body {
    width: 3360px;
    height: 1914px;
    overflow: hidden;
    position: relative;
    background: #191d2b;
    font-family: "Liberation Sans", Arial, sans-serif;
    color: #000;
}

i {
    font-style: normal;
}

.defs {
    position: absolute;
}

/* menu bar */
.menubar {
    height: 46px;
    display: flex;
    align-items: center;
    background: #191d2b;
    border-bottom: 2px solid #07080c;
    color: #fff;
    font-family: Inter, "Liberation Sans", sans-serif;
    font-size: 27px;
}

.apple {
    width: 32px;
    height: 32px;
    margin-left: 39px;
    margin-top: -6px;
}

.menu {
    display: flex;
    gap: 38px;
    margin-left: 38px;
}

.app-name {
    font-weight: 700;
    letter-spacing: 2.4px;
}

.status {
    margin-left: auto;
    display: flex;
    align-items: center;
}

.st {
    height: 40px;
    flex: none;
}

.st-cloud, .st-delta {
    width: 56px;
}

.st-air {
    width: 65px;
}

.st-time {
    width: 70px;
}

.st-bt {
    width: 66px;
}

.st-wifi {
    width: 57px;
}

.st-vol {
    width: 55px;
}

.st-pct {
    margin-left: 20px;
    font-size: 23px;
}

.st-bat {
    width: 44px;
    height: 24px;
    margin-left: 11px;
}

.st-clock {
    margin-left: 36px;
    font-size: 28px;
}

.st-user {
    margin-left: 29px;
    font-size: 27.5px;
}

.st-search, .st-siri {
    width: 40px;
}

.st-search {
    margin-left: 26px;
}

.st-siri {
    margin-left: 25px;
}

.st-list {
    width: 36px;
    margin-left: 21px;
    margin-right: 46px;
}

/* main window */
.window {
    height: 1868px;
    display: flex;
    flex-direction: column;
    background: #ececec;
    border-radius: 12px 12px 0 0;
    overflow: hidden;
}

.titlebar {
    height: 44px;
    flex: none;
    position: relative;
    display: flex;
    align-items: center;
    justify-content: center;
    background: linear-gradient(#ededed, #d3d3d3);
    border-bottom: 2px solid #b9b9b9;
}

.window-title {
    padding-top: 2px;
    font-size: 26px;
    color: #4d4d4d;
}

.lights {
    position: absolute;
    left: 16px;
    top: 10px;
    display: flex;
    gap: 16px;
}

.light {
    width: 24px;
    height: 24px;
    border-radius: 50%;
    background: #cfcfcf;
    border: 1px solid #bcbcbc;
}

.light-red {
    background: #fc615d;
    border-color: #e14942;
}

.light-green {
    background: #34c84a;
    border-color: #2aac3c;
}

.toolbar {
    height: 88px;
    flex: none;
    display: flex;
    align-items: center;
    padding-left: 13px;
    background: linear-gradient(#eeeeee, #c9c9c9);
    border-bottom: 2px solid #b5b5b5;
    border-top: 1px solid #f4f4f4;
}

.handle {
    width: 6px;
    height: 60px;
    flex: none;
    background: radial-gradient(circle, #a9a9a9 2.4px, transparent 3px) 0 0 / 6px 12px repeat-y;
}

.handle-gap {
    margin-left: 23px;
    margin-right: 1px;
}

.handle-mid {
    margin-left: 10px;
}

.handle-last {
    margin-left: 13px;
    margin-right: 2px;
}

.handle-short {
    height: 24px;
}

.combo {
    width: 382px;
    height: 38px;
    margin-left: 11px;
    display: flex;
    align-items: center;
    background: #fff;
    border-radius: 8px;
    box-shadow: 0 1px 2px rgba(0, 0, 0, .4);
}

.combo-icon {
    width: 32px;
    height: 34px;
    margin-left: 19px;
}

.combo-label {
    margin-left: 5px;
    font-size: 26.5px;
}

.combo-arrows {
    width: 16px;
    height: 30px;
    margin-left: auto;
    margin-right: 8px;
}

.tb {
    width: 92px;
    height: 68px;
    flex: none;
    display: flex;
    align-items: center;
    justify-content: center;
    padding: 0;
    border: 0;
    background: none;
}

.tb svg {
    width: 64px;
    height: 64px;
    overflow: visible;
    flex: none;
}

.tb-drop {
    width: 117px;
    justify-content: flex-start;
    padding-left: 24px;
    position: relative;
}

.drop-arrow {
    position: absolute;
    left: 95px;
    top: 46px;
    border-left: 7.5px solid transparent;
    border-right: 7.5px solid transparent;
    border-top: 16px solid #666;
}

.tb-sep {
    width: 2px;
    height: 82px;
    flex: none;
    margin: 0 9px;
    border-left: 2px dotted #777;
}

.tb-sep-tight {
    margin-right: 5px;
}

.toolbar-small {
    height: 47px;
    flex: none;
    display: flex;
    align-items: center;
    padding-left: 13px;
    gap: 41px;
    background: linear-gradient(#eeeeee, #cbcbcb);
    border-bottom: 2px solid #b5b5b5;
    border-top: 1px solid #f4f4f4;
    font-size: 21.6px;
}

.toolbar-small .handle {
    margin-right: -20px;
}

.cmd {
    padding-top: 2px;
    color: #111;
}

.workspace {
    flex: 1;
    min-height: 0;
    display: flex;
    background: #e1e1e1;
}

.bottom-bar {
    height: 19px;
    flex: none;
    display: flex;
    gap: 7px;
    padding: 8px 0 0 5px;
    background: #ececec;
    border-top: 2px solid #9a9a9a;
    overflow: hidden;
}

/* left dock */
.dock {
    width: 887px;
    flex: none;
    display: flex;
    flex-direction: column;
    border-right: 2px solid #8b8b8b;
}

.dock-title {
    height: 41px;
    flex: none;
    position: relative;
    display: flex;
    align-items: center;
    gap: 7px;
    padding: 2px 0 0 4px;
    background: linear-gradient(#ececec, #d0d0d0);
    border-bottom: 2px solid #bdbdbd;
}

.dock-btn {
    width: 28px;
    height: 28px;
    flex: none;
    display: block;
    border-radius: 50%;
    background: #555;
    color: #eee;
    font-size: 22px;
    font-weight: 700;
    line-height: 26px;
    text-align: center;
}

.dock-name {
    position: absolute;
    left: 68px;
    right: 0;
    top: 11px;
    text-align: center;
    font-size: 21.5px;
    color: #111;
}

.dock-pane {
    height: 755px;
    flex: none;
    margin-top: 24px;
    padding: 33px 7px 7px;
    background: #dfdfdf;
    border-radius: 10px 10px 0 0;
}

.tree {
    height: 715px;
    background: #fff;
    border: 1px solid #b5b5b5;
    font-size: 27px;
}

.tree-head {
    height: 35px;
    padding-left: 8px;
    font-size: 24.4px;
    line-height: 32px;
    border-bottom: 3px solid #d8d8d8;
    background: #f6f6f6;
}

.tree-row {
    height: 36px;
    padding-left: 10px;
    display: flex;
    align-items: center;
}

.tree-doc {
    padding-left: 14px;
}

.tree-wing {
    padding-left: 55px;
}

.arrow-down {
    border-left: 9px solid transparent;
    border-right: 9px solid transparent;
    border-top: 15px solid #8b8b8b;
}

.arrow-right {
    border-top: 9px solid transparent;
    border-bottom: 9px solid transparent;
    border-left: 14px solid #8b8b8b;
}

.tree-icon {
    width: 26px;
    height: 30px;
    margin: 0 12px 0 21px;
}

.tree-icon-wide {
    width: 32px;
    height: 32px;
    margin: 0 12px 0 22px;
}

.props {
    height: 815px;
    flex: none;
    margin: 10px 7px 0 6px;
    padding: 5px 8px 0 7px;
    display: flex;
    flex-direction: column;
    align-items: stretch;
    background: #d8d8d8;
    border-radius: 8px;
}

.props-table {
    height: 777px;
    flex: none;
    display: flex;
    flex-direction: column;
    border: 1px solid #a8a8a8;
    background: #fff;
    overflow: hidden;
}

.props-head {
    height: 35px;
    flex: none;
    display: flex;
    align-items: center;
    border-bottom: 2px solid #d4d4d4;
    font-size: 23.5px;
}

.props-col {
    width: 199px;
    padding-left: 9px;
    border-right: 2px solid #d4d4d4;
}

.props-col2 {
    padding-left: 8px;
}

.props-rows {
    flex: 1;
    background: repeating-linear-gradient(#fff 0 42px, #eaf0fb 42px 84px);
}

.props-tabs {
    align-self: flex-start;
    width: 241px;
    height: 39px;
    flex: none;
    margin: 14px 0 0 308px;
    display: flex;
    border: 1px solid #b4b4b4;
    border-radius: 8px;
    overflow: hidden;
    background: #e4e4e4;
    font-size: 26.5px;
}

.props-tab {
    flex: 1;
    padding-top: 3px;
    text-align: center;
}

.props-tab-on {
    flex: none;
    width: 89px;
    background: #fff;
}

/* 3d view */
.view {
    flex: 1;
    min-width: 0;
    display: flex;
    flex-direction: column;
}

.canvas {
    height: 1628px;
    flex: none;
    background: linear-gradient(#32305f, #9494a8);
}

.scene {
    display: block;
    width: 2473px;
    height: 1628px;
}

.cube-text {
    font-size: 11px;
    fill: #222;
}

.axis-text {
    font-size: 15px;
}

.axis-z {
    fill: #1414d8;
}

.axis-x {
    fill: #d81414;
}

.triad-text {
    font-size: 12px;
    fill: #222;
}

.doc-tabs {
    flex: 1;
    padding-left: 1115px;
    background: linear-gradient(#e1e1e1 21px, #efefef 21px);
}

.doc-tab {
    width: 244px;
    height: 39px;
    margin-top: 3px;
    display: flex;
    align-items: center;
    background: #dcdcdc;
    border: 1px solid #cacaca;
    border-radius: 8px 8px 0 0;
    font-size: 26px;
}

.doc-close {
    width: 24px;
    height: 24px;
    margin: 0 13px 0 18px;
    border-radius: 50%;
    background: #8e8e8e;
    color: #dcdcdc;
    font-size: 22px;
    line-height: 22px;
    text-align: center;
}

/* dialog */
.dialog {
    position: absolute;
    left: 250px;
    top: 265px;
    width: 2146px;
    height: 1060px;
    display: flex;
    flex-direction: column;
    background: #ececec;
    border-radius: 12px;
    box-shadow: 0 30px 90px rgba(0, 0, 0, .5);
}

.dialog-title {
    height: 44px;
    flex: none;
    position: relative;
    display: flex;
    align-items: center;
    justify-content: center;
    font-size: 26.8px;
    color: #4d4d4d;
    background: linear-gradient(#ececec, #d4d4d4);
    border-bottom: 2px solid #b4b4b4;
    border-radius: 12px 12px 0 0;
}

.dialog-name {
    padding-top: 4px;
}

.lights-dialog {
    left: 16px;
    top: 11px;
}

.name-row {
    height: 39px;
    flex: none;
    margin-top: 40px;
    display: flex;
    align-items: center;
    font-size: 27px;
}

.name-label {
    width: 227px;
    padding: 2px 0 0 40px;
}

.led {
    width: 11px;
    height: 13px;
    flex: none;
    border-radius: 50%;
    background: #b4b4b4;
}

.text-input {
    width: 340px;
    height: 39px;
    margin-left: 3px;
    padding-left: 3px;
    line-height: 39px;
    background: #fff;
    border: 1px solid #bcbcbc;
}

.tabs {
    height: 39px;
    flex: none;
    margin-top: 82px;
    margin-left: 794px;
    display: flex;
    align-self: flex-start;
    position: relative;
    background: #fff;
    border-radius: 8px;
    box-shadow: 0 1px 3px rgba(0, 0, 0, .4);
    font-size: 27px;
    overflow: hidden;
}

.tab {
    display: flex;
    align-items: center;
    justify-content: center;
    padding-top: 2px;
    border-right: 1px solid #ddd;
}

.tab:nth-child(1) {
    width: 134px;
}

.tab:nth-child(2) {
    width: 95px;
}

.tab:nth-child(3) {
    width: 126px;
    padding-left: 2px;
}

.tab:nth-child(4) {
    width: 195px;
    padding-left: 6px;
    border-right: 0;
}

.tab-on {
    color: #fff;
    background: linear-gradient(#6fa5fb, #1a6cff);
}

.pane {
    width: 2100px;
    height: 701px;
    flex: none;
    margin: -19px 0 0 21px;
    padding: 35px 4px 0 5px;
    background: #e1e1e1;
    border: 1px solid #d9d9d9;
    border-radius: 10px;
}

.panels-row {
    height: 35px;
    display: flex;
    align-items: center;
    font-size: 27.2px;
}

.panels-label {
    width: 560px;
    padding-left: 19px;
}

.spin-input {
    width: 69px;
    height: 35px;
    margin-left: 5px;
    padding-left: 4px;
    line-height: 33px;
    background: #fff;
    border: 1px solid #bcbcbc;
    border-bottom-width: 2px;
}

.stepper {
    width: 22px;
    height: 41px;
    margin-left: 9px;
    background: #fff;
    border: 1px solid #bdbdbd;
    border-radius: 8px;
}

.stepper svg {
    display: block;
    width: 100%;
    height: 100%;
}

.grid-box {
    height: 519px;
    margin-top: 42px;
    overflow: hidden;
    background: #fff linear-gradient(90deg, #f3f3f3 32px, transparent 32px);
    border: 1px solid #a9a9a9;
    border-right: 0;
}

.grid {
    width: 2232px;
    table-layout: fixed;
    border-collapse: collapse;
    font-size: 27px;
}

.grid th {
    font-weight: 400;
    padding: 0;
}

.grid thead tr {
    height: 41px;
    background: #f6f6f6;
    border-bottom: 2px solid #cfcfcf;
}

.grid thead th {
    font-size: 23.5px;
    color: #111;
    text-align: center;
    white-space: nowrap;
    overflow: hidden;
    position: relative;
}

.grid thead th + th::after {
    content: "";
    position: absolute;
    right: 0;
    top: 5px;
    bottom: 5px;
    border-right: 2px solid #dcdcdc;
}

.grid thead .cut-col {
    text-align: left;
    padding-left: 46px;
}

.corner {
    width: 32px;
}

.grid tbody tr {
    height: 60px;
    border-bottom: 2px solid #b4b4b4;
}

.grid tbody th {
    text-align: left;
    padding-left: 9px;
    font-size: 24px;
    background: #f3f3f3;
}

.grid td {
    padding: 0 0 0 11px;
    background: #fff;
    border-left: 1px solid #b4b4b4;
    white-space: nowrap;
    overflow: hidden;
}

.grid td:first-of-type {
    border-left: 0;
}

.dialog-buttons {
    margin-top: 48px;
    padding-right: 37px;
    display: flex;
    justify-content: flex-end;
    gap: 31px;
}

.btn {
    width: 150px;
    height: 40px;
    padding: 0;
    font-family: inherit;
    font-size: 27px;
    color: #000;
    background: #fff;
    border: 1px solid #c4c4c4;
    border-radius: 6px;
    box-shadow: 0 1px 2px rgba(0, 0, 0, .3);
}

.btn-ok {
    width: 136px;
    background: linear-gradient(#72a8fa, #1a6cff);
    border: 0;
}
```
